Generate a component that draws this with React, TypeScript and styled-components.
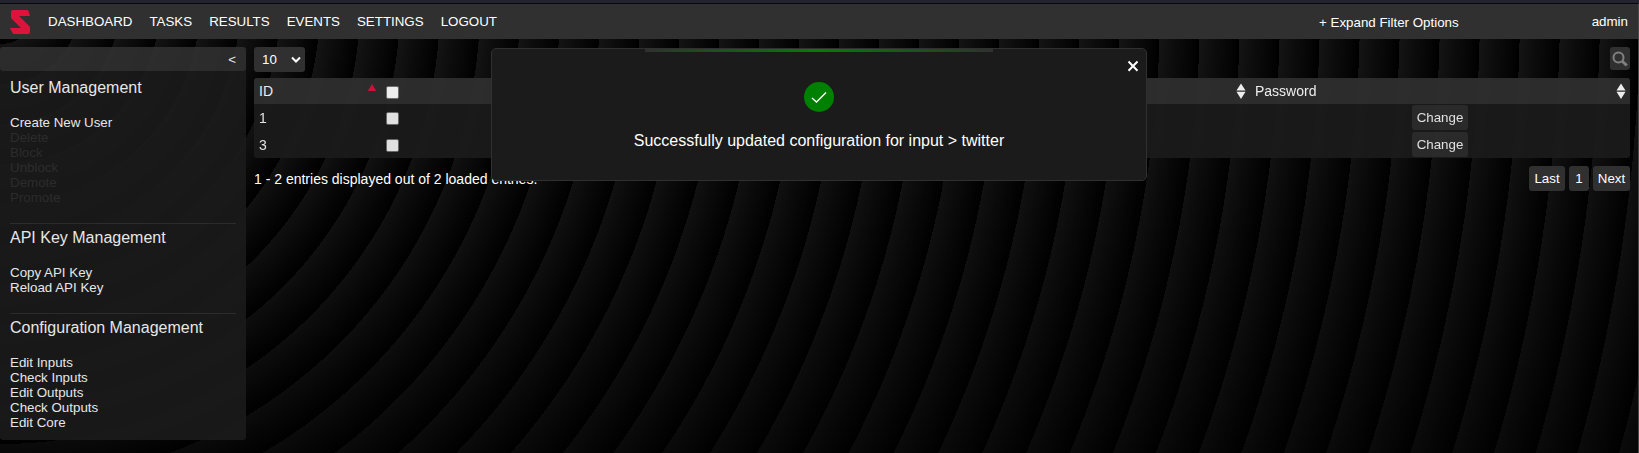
import React from 'react';
import styled, { createGlobalStyle } from 'styled-components';

const Global = createGlobalStyle`
  * { box-sizing: border-box; }
  body { margin: 0; background: #000; font-family: "Liberation Sans", Arial, sans-serif; overflow: hidden; }
  button, select { font-family: inherit; }
`;

const Frame = styled.div`
  height: 453px;
  display: flex;
  flex-direction: column;
  background: #22242f;
  padding-top: 3px;
`;

const Page = styled.div`
  flex: 1;
  display: flex;
  flex-direction: column;
  border-top: 1px solid #08080c;
  border-right: 1px solid #484848;
  background:
    linear-gradient(rgba(0, 0, 0, 0), rgba(0, 0, 0, 0.5)) padding-box,
    repeating-radial-gradient(circle at 0 0, #151515 0, #000 40px) padding-box;
`;

const NavBar = styled.nav`
  height: 35px;
  flex: none;
  display: flex;
  align-items: center;
  background: #303030;
  color: #fff;
  font-size: 13.333px;
  padding: 0 10px;
`;

const Logo = styled.svg`
  width: 20px;
  height: 24px;
  margin-right: 18px;
`;

const NavItem = styled.a`
  margin-right: 17px;
  line-height: 15px;
`;

const FilterToggle = styled.span`
  margin-left: auto;
  margin-right: 133px;
  padding-top: 2px;
`;

const Body = styled.div`
  display: flex;
  align-items: flex-start;
  padding: 8px 8px 0 0;
  gap: 8px;
`;

const Sidebar = styled.aside`
  width: 246px;
  height: 393px;
  flex: none;
  border-radius: 3px;
  background: #1b1b1b;
  opacity: 0.9;
`;

const Collapse = styled.div`
  height: 24px;
  border-radius: 3px;
  background: #303030;
  color: #fff;
  font-size: 13.333px;
  line-height: 25px;
  text-align: right;
  padding-right: 10px;
`;

const Section = styled.section<{ $divided?: boolean }>`
  margin: 0 10px;
  height: ${(p) => (p.$divided ? 90 : 152)}px;
  border-top: ${(p) => (p.$divided ? '1px solid #303030' : 'none')};
  padding-top: ${(p) => (p.$divided ? 4 : 7)}px;
`;

const SectionTitle = styled.h2`
  margin: 0 0 17px;
  font-size: 16px;
  font-weight: 400;
  line-height: 20px;
  color: #fff;
`;

const Action = styled.div<{ $disabled?: boolean }>`
  font-size: 13.333px;
  line-height: 15px;
  color: ${(p) => (p.$disabled ? '#303030' : '#fff')};
`;

const Main = styled.main`
  flex: 1;
  min-width: 0;
  display: flex;
  flex-direction: column;
`;

const Toolbar = styled.div`
  display: flex;
  justify-content: space-between;
  height: 31px;
`;

const PageSize = styled.div`
  width: 51px;
  height: 25px;
  border-radius: 3px;
  background: #303030;
  color: #fff;
  font-size: 13.333px;
  display: flex;
  align-items: center;
  justify-content: space-between;
  padding: 0 4px 0 8px;
`;

const SearchButton = styled.button`
  width: 20px;
  height: 23px;
  padding: 0;
  border: 0;
  border-radius: 3px;
  background: #303030;
  display: flex;
  align-items: center;
  justify-content: center;
`;

const Table = styled.div`
  border-radius: 3px;
  overflow: hidden;
  opacity: 0.93;
  background: #1b1b1b;
  color: #fff;
  font-size: 14px;
`;

const Row = styled.div<{ $head?: boolean }>`
  display: grid;
  grid-template-columns: 126px 498px 372px 1fr;
  align-items: center;
  height: ${(p) => (p.$head ? 26 : 27)}px;
  background: ${(p) => (p.$head ? '#303030' : 'transparent')};
  opacity: ${(p) => (p.$head ? 1 : 0.94)};
`;

const Cell = styled.div<{ $center?: boolean }>`
  display: flex;
  align-items: center;
  justify-content: ${(p) => (p.$center ? 'center' : 'space-between')};
  padding: 0 5px;
  height: 100%;
`;

const Check = styled.input.attrs({ type: 'checkbox' })<{ $head?: boolean }>`
  appearance: none;
  width: 13px;
  height: 13px;
  margin: ${(p) => (p.$head ? 3 : 2)}px 0 0 1px;
  border: 1px solid #767676;
  border-radius: 2px;
  background: #fff;
`;

const SortMark = styled.svg`
  width: 10px;
  height: 16px;
  flex: none;
  margin-right: -1px;
`;

const AscMark = styled(SortMark)`
  margin-right: -2px;
  margin-top: -4px;
`;

const SmallButton = styled.button<{ $w: number }>`
  width: ${(p) => p.$w}px;
  height: 25px;
  padding: 0;
  border: 0;
  border-radius: 3px;
  background: #303030;
  color: #fff;
  font-size: 13.333px;
  line-height: 25px;
`;

const Footer = styled.div`
  display: flex;
  justify-content: space-between;
  padding-top: 8px;
  color: #fff;
  font-size: 14px;
`;

const Summary = styled.span`
  line-height: 16px;
  padding-top: 5px;
`;

const Pager = styled.div`
  display: flex;
  gap: 4px;
`;

const Toast = styled.div`
  position: absolute;
  top: 48px;
  left: 491px;
  width: 656px;
  height: 133px;
  border: 1px solid #303030;
  border-radius: 5px;
  background: #1b1b1b;
  color: #fff;
  display: flex;
  flex-direction: column;
  align-items: center;
`;

const ToastBar = styled.div`
  width: 348px;
  height: 3px;
  flex: none;
  background: linear-gradient(90deg, #303030, green, #303030);
`;

const ToastClose = styled.svg`
  align-self: flex-end;
  width: 12px;
  height: 12px;
  margin: 8px 7px 0 0;
`;

const ToastIcon = styled.svg`
  width: 30px;
  height: 30px;
  margin-top: 10px;
`;

const ToastText = styled.p`
  margin: 20px 0 0;
  font-size: 16px;
  line-height: 18px;
`;

const links = ['DASHBOARD', 'TASKS', 'RESULTS', 'EVENTS', 'SETTINGS', 'LOGOUT'];
const userActions = ['Delete', 'Block', 'Unblock', 'Demote', 'Promote'];
const configActions = ['Edit Inputs', 'Check Inputs', 'Edit Outputs', 'Check Outputs', 'Edit Core'];

const Sort = () => (
  <SortMark viewBox="0 0 10 16">
    <path d="M5 .5 9.500 7.500H.5ZM.5 8.800h9L5 16Z" fill="#fff" />
  </SortMark>
);

export default function App() {
  return (
    <Frame>
      <Global />
      <Page>
        <NavBar>
          <Logo viewBox="0 0 20 24">
            <path
              d="M3 0H17Q18 0 18.5 1L20 6H9L19.2 16Q20 17 20 18V22Q20 24 18 24H4Q3 24 2.5 23L0 18H11L1.5 8.500Q1 8 1 7V2Q1 0 3 0Z"
              fill="#dc143c"
            />
          </Logo>
          {links.map((l) => (
            <NavItem key={l}>{l}</NavItem>
          ))}
          <FilterToggle>+ Expand Filter Options</FilterToggle>
          <span>admin</span>
        </NavBar>
        <Body>
          <Sidebar>
            <Collapse>&lt;</Collapse>
            <Section>
              <SectionTitle>User Management</SectionTitle>
              <Action>Create New User</Action>
              {userActions.map((a) => (
                <Action key={a} $disabled>{a}</Action>
              ))}
            </Section>
            <Section $divided>
              <SectionTitle>API Key Management</SectionTitle>
              <Action>Copy API Key</Action>
              <Action>Reload API Key</Action>
            </Section>
            <Section $divided>
              <SectionTitle>Configuration Management</SectionTitle>
              {configActions.map((a) => (
                <Action key={a}>{a}</Action>
              ))}
            </Section>
          </Sidebar>
          <Main>
            <Toolbar>
              <PageSize>
                10
                <svg width="10" height="8" viewBox="0 0 10 8">
                  <path d="M1 1.500 5 5.500 9 1.500" fill="none" stroke="#fff" strokeWidth="2" />
                </svg>
              </PageSize>
              <SearchButton aria-label="Search">
                <svg width="16" height="16" viewBox="0 0 16 16" fill="none" stroke="#808080">
                  <circle cx="6.500" cy="6.500" r="5" strokeWidth="2" />
                  <path d="M10 10 14.800 14.500" strokeWidth="3" />
                </svg>
              </SearchButton>
            </Toolbar>
            <Table>
              <Row $head>
                <Cell>
                  ID
                  <AscMark viewBox="0 0 10 16">
                    <path d="M5 3 9.200 10H.8Z" fill="#dc143c" />
                  </AscMark>
                </Cell>
                <Cell><Check $head /></Cell>
                <Cell><span /><Sort /></Cell>
                <Cell>Password<Sort /></Cell>
              </Row>
              {['1', '3'].map((id) => (
                <Row key={id}>
                  <Cell>{id}</Cell>
                  <Cell><Check /></Cell>
                  <Cell />
                  <Cell $center><SmallButton $w={56}>Change</SmallButton></Cell>
                </Row>
              ))}
            </Table>
            <Footer>
              <Summary>1 - 2 entries displayed out of 2 loaded entries.</Summary>
              <Pager>
                <SmallButton $w={36}>Last</SmallButton>
                <SmallButton $w={20}>1</SmallButton>
                <SmallButton $w={37}>Next</SmallButton>
              </Pager>
            </Footer>
          </Main>
        </Body>
      </Page>
      <Toast>
        <ToastBar />
        <ToastClose viewBox="0 0 12 12">
          <path d="M1.500 1.500 10.500 10.800M10.500 1.500 1.500 10.800" stroke="#fff" strokeWidth="2" />
        </ToastClose>
        <ToastIcon viewBox="0 0 30 30">
          <circle cx="15" cy="15" r="15" fill="green" />
          <path d="M8 16 12.500 20 22 10.500" fill="none" stroke="#fff" strokeWidth="1.300" />
        </ToastIcon>
        <ToastText>Successfully updated configuration for input &gt; twitter</ToastText>
      </Toast>
    </Frame>
  );
}
